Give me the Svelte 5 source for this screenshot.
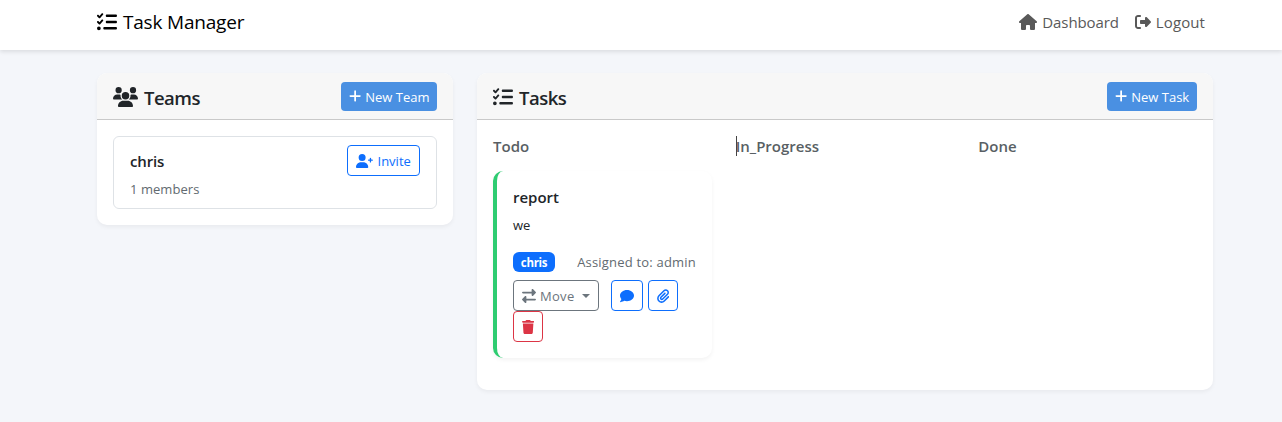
<script>
  const icons = {
    tasks: [512, 'M152.1 38.2c9.9 8.9 10.7 24 1.8 33.9l-72 80c-4.4 4.9-10.6 7.8-17.2 7.9s-12.9-2.4-17.6-7L7 113C-2.3 103.6-2.3 88.4 7 79s24.6-9.4 33.9 0l22.1 22.1 55.1-61.2c8.9-9.9 24-10.7 33.9-1.8zm0 160c9.9 8.9 10.7 24 1.8 33.9l-72 80c-4.4 4.9-10.6 7.8-17.2 7.9s-12.9-2.4-17.6-7L7 273c-9.4-9.4-9.4-24.6 0-33.9s24.6-9.4 33.9 0l22.1 22.1 55.1-61.2c8.9-9.9 24-10.7 33.9-1.8zM224 96c0-17.7 14.3-32 32-32H480c17.7 0 32 14.3 32 32s-14.3 32-32 32H256c-17.7 0-32-14.3-32-32zm0 160c0-17.7 14.3-32 32-32H480c17.7 0 32 14.3 32 32s-14.3 32-32 32H256c-17.7 0-32-14.3-32-32zM160 416c0-17.7 14.3-32 32-32H480c17.7 0 32 14.3 32 32s-14.3 32-32 32H192c-17.7 0-32-14.3-32-32zM48 368a48 48 0 1 1 0 96 48 48 0 1 1 0-96z'],
    home: [576, 'M575.8 255.5c0 18-15 32.1-32 32.1h-32l.7 160.2c0 2.7-.2 5.4-.5 8.1V472c0 22.1-17.9 40-40 40H392c-22.1 0-40-17.9-40-40V384c0-17.7-14.3-32-32-32H256c-17.7 0-32 14.3-32 32v88c0 22.1-17.9 40-40 40H104c-22.1 0-40-17.9-40-40V287.6H32c-18 0-32-14-32-32.1c0-9 3-17 10-24L266.4 8c7-7 15-8 22-8s15 2 21 7L564.8 231.5c8 7 12 15 11 24z'],
    logout: [512, 'M377.9 105.9L500.7 228.7c7.2 7.2 11.3 17.1 11.3 27.3s-4.1 20.1-11.3 27.3L377.9 406.1c-6.4 6.4-15 9.9-24 9.9c-18.7 0-33.9-15.2-33.9-33.9l0-62.1-128 0c-17.7 0-32-14.3-32-32l0-64c0-17.7 14.3-32 32-32l128 0 0-62.1c0-18.7 15.2-33.9 33.9-33.9c9 0 17.6 3.6 24 9.9zM160 96L96 96c-17.7 0-32 14.3-32 32l0 256c0 17.7 14.3 32 32 32l64 0c17.7 0 32 14.3 32 32s-14.3 32-32 32l-64 0c-53 0-96-43-96-96L0 128C0 75 43 32 96 32l64 0c17.7 0 32 14.3 32 32s-14.3 32-32 32z'],
    users: [640, 'M144 0a80 80 0 1 1 0 160A80 80 0 1 1 144 0zM512 0a80 80 0 1 1 0 160A80 80 0 1 1 512 0zM0 298.7C0 239.8 47.8 192 106.7 192h42.7c15.9 0 31 3.5 44.6 9.7c-1.3 7.2-1.9 14.7-1.9 22.3c0 38.2 16.8 72.5 43.3 96H21.3C9.6 320 0 310.4 0 298.7zM405.3 320c26.6-23.5 43.3-57.8 43.3-96c0-7.6-.7-15-1.9-22.3c13.6-6.3 28.7-9.7 44.6-9.7h42.7C592.2 192 640 239.8 640 298.7c0 11.8-9.6 21.3-21.3 21.3H405.3zM224 224a96 96 0 1 1 192 0 96 96 0 1 1 -192 0zM128 485.3C128 411.7 187.7 352 261.3 352H378.7C452.3 352 512 411.7 512 485.3c0 14.7-11.9 26.7-26.7 26.7H154.7c-14.7 0-26.7-11.9-26.7-26.7z'],
    invite: [640, 'M96 128a128 128 0 1 1 256 0A128 128 0 1 1 96 128zM0 482.3C0 383.8 79.8 304 178.3 304h91.4C368.2 304 448 383.8 448 482.3c0 16.4-13.3 29.7-29.7 29.7H29.7C13.3 512 0 498.7 0 482.3zM504 290V248H462c-13.3 0-24-10.7-24-24s10.7-24 24-24h42V158c0-13.3 10.7-24 24-24s24 10.7 24 24v42h42c13.3 0 24 10.7 24 24s-10.7 24-24 24H552v42c0 13.3-10.7 24-24 24s-24-10.7-24-24z'],
    plus: [448, 'M256 80c0-17.7-14.3-32-32-32s-32 14.3-32 32V224H48c-17.7 0-32 14.3-32 32s14.3 32 32 32H192V432c0 17.7 14.3 32 32 32s32-14.3 32-32V288H400c17.7 0 32-14.3 32-32s-14.3-32-32-32H256V80z'],
    move: [512, 'M32 96l320 0V32c0-12.9 7.8-24.6 19.8-29.6s25.7-2.2 34.9 6.9l96 96c6 6 9.4 14.1 9.4 22.6s-3.4 16.6-9.4 22.6l-96 96c-9.2 9.2-22.9 11.9-34.9 6.9s-19.8-16.6-19.8-29.6V160L32 160c-17.7 0-32-14.3-32-32s14.3-32 32-32zM480 352c17.7 0 32 14.3 32 32s-14.3 32-32 32H160v64c0 12.9-7.8 24.6-19.8 29.6s-25.7 2.2-34.9-6.9l-96-96c-6-6-9.4-14.1-9.4-22.6s3.4-16.6 9.4-22.6l96-96c9.2-9.2 22.9-11.9 34.9-6.9s19.8 16.6 19.8 29.6l0 64H480z'],
    comment: [512, 'M512 240c0 114.9-114.6 208-256 208c-37.1 0-72.3-6.4-104.1-17.9c-11.9 8.7-31.3 20.6-54.3 30.6C73.6 471.1 44.7 480 16 480c-6.5 0-12.3-3.9-14.8-9.9c-2.5-6-1.1-12.8 3.4-17.4C19 437 40 410 49 367C18 332 0 288 0 240C0 125.1 114.6 32 256 32s256 93.1 256 208z'],
    clip: [448, 'M364.2 83.8c-24.4-24.4-64-24.4-88.4 0l-184 184c-42.1 42.1-42.1 110.3 0 152.4s110.3 42.1 152.4 0l152-152c10.9-10.9 28.7-10.9 39.6 0s10.9 28.7 0 39.6l-152 152c-64 64-167.6 64-231.6 0s-64-167.6 0-231.6l184-184c46.3-46.3 121.3-46.3 167.6 0s46.3 121.3 0 167.6l-176 176c-28.6 28.6-75 28.6-103.6 0s-28.6-75 0-103.6l144-144c10.9-10.9 28.7-10.9 39.6 0s10.9 28.7 0 39.6l-144 144c-6.7 6.7-6.7 17.7 0 24.4s17.7 6.7 24.4 0l176-176c24.4-24.4 24.4-64 0-88.4z'],
    trash: [448, 'M135.2 17.7L128 32H32C14.3 32 0 46.3 0 64S14.3 96 32 96H416c17.7 0 32-14.3 32-32s-14.3-32-32-32H320l-7.2-14.3C307.4 6.8 296.3 0 284.2 0H163.8c-12.1 0-23.2 6.8-28.6 17.7zM416 128H32L53.2 467c1.6 25.3 22.6 45 47.9 45H346.9c25.3 0 46.3-19.7 47.9-45L416 128z']
  };
</script>

{#snippet icon(name)}
  <svg class="icon {name}" viewBox="0 0 {icons[name][0]} 512" aria-hidden="true"><path d={icons[name][1]} /></svg>
{/snippet}

<nav>
  <div class="brand">{@render icon('tasks')}<span>Task Manager</span></div>
  <div class="links">
    <a href="#dashboard">{@render icon('home')}<span class="dash">Dashboard</span></a>
    <a href="#logout">{@render icon('logout')}<span class="out">Logout</span></a>
  </div>
</nav>

<main>
  <section class="card teams">
    <header>
      <h5>{@render icon('users')}<span>Teams</span></h5>
      <button class="solid">{@render icon('plus')}<span>New Team</span></button>
    </header>
    <div class="body">
      <div class="team">
        <div class="info">
          <h6>chris</h6>
          <p>1 members</p>
        </div>
        <button class="outline inv">{@render icon('invite')}<span>Invite</span></button>
      </div>
    </div>
  </section>

  <section class="card board">
    <header>
      <h5>{@render icon('tasks')}<span>Tasks</span></h5>
      <button class="solid new-task">{@render icon('plus')}<span>New Task</span></button>
    </header>
    <div class="body columns">
      <div class="column">
        <h6>Todo</h6>
        <article>
          <h6 class="title">report</h6>
          <p class="desc">we</p>
          <div class="meta"><span class="badge">chris</span><span class="assigned">Assigned to: admin</span></div>
          <div class="actions">
            <button class="outline move-btn">{@render icon('move')}<span>Move</span><i class="caret"></i></button>
            <button class="outline comment-btn">{@render icon('comment')}</button>
            <button class="outline clip-btn">{@render icon('clip')}</button>
            <button class="outline danger">{@render icon('trash')}</button>
          </div>
        </article>
      </div>
      <div class="column"><h6 class="progress">In_Progress</h6></div>
      <div class="column"><h6>Done</h6></div>
    </div>
  </section>
</main>

<style>
  :global(body) { background: #f4f6fa; font-family: "Open Sans", sans-serif; color: #212529; }
  :global(#app) { min-height: 422px; }
  * { box-sizing: border-box; }
  h5, h6, p { margin: 0; }
  span, h6, p, a { white-space: nowrap; }
  .icon { display: block; flex: none; height: 1em; fill: currentColor; }
  nav { height: 50px; padding: 0 77px 6px 97px; display: flex; align-items: center; justify-content: space-between; background: #fff; box-shadow: 0 2px 4px rgba(0, 0, 0, .1); }
  .brand { display: flex; align-items: center; gap: 6px; font-size: 19px; line-height: 30px; letter-spacing: -.2px; color: #000; }
  .brand .icon { font-size: 20px; }
  .links { display: flex; gap: 16px; }
  .links a { display: flex; align-items: center; gap: 5px; font-size: 15px; line-height: 24px; letter-spacing: -.1px; color: #595959; text-decoration: none; }
  .out { letter-spacing: .1px; }
  .links .icon { font-size: 16px; }
  main { display: grid; grid-template-columns: 356px 736px; gap: 24px; align-items: start; padding: 23px 0 0 97px; }
  .card { background: #fff; border-radius: 10px; box-shadow: 0 2px 4px rgba(0, 0, 0, .05); overflow: hidden; }
  .card header { height: 47px; padding: 0 16px; display: flex; align-items: center; justify-content: space-between; background: #f7f7f7; border-bottom: 1px solid #c9c9c9; }
  h5 { display: flex; align-items: center; gap: 6px; padding-top: 1px; font-size: 18.5px; line-height: 24px; font-weight: 600; letter-spacing: -.5px; }
  h5 span { padding-top: 2px; }
  h5 .icon { font-size: 20px; }
  .body { padding: 16px; }
  button { display: flex; align-items: center; margin: 0; border-radius: 4px; font-family: inherit; font-size: 13px; line-height: 21px; }
  button span { padding-top: 1px; }
  button .icon { font-size: 14px; }
  .solid { width: 96px; height: 29px; padding: 0 8px; gap: 4px; border: 0; background: #4a90e2; color: #fff; }
  .solid span { padding-top: 2px; }
  .new-task { width: 90px; }
  .outline { height: 31px; padding: 0 8px; border: 1px solid #0d6efd; background: transparent; color: #0d6efd; }
  .team { height: 73px; display: flex; justify-content: space-between; padding: 8px 16px; border: 1px solid #dee2e6; border-radius: 6px; }
  .team h6 { margin-top: 7px; font-size: 15px; line-height: 19px; font-weight: 600; letter-spacing: -.15px; }
  .team p { margin-top: 8px; font-size: 13px; line-height: 21px; letter-spacing: .05px; color: #626a70; }
  .inv { width: 73px; gap: 4px; }
  .columns { display: grid; grid-template-columns: 219px 219px 219px; column-gap: 23.67px; height: 270px; }
  .column > h6 { font-size: 15px; line-height: 19px; font-weight: 600; color: #595f64; padding-top: 1px; }
  .progress { box-shadow: inset 1px 0 #444; }
  article { margin-top: 15px; height: 187px; padding: 16px; border-left: 4px solid #2ecc71; border-radius: 10px; box-shadow: 0 2px 4px rgba(0, 0, 0, .05); }
  .title { font-size: 15px; line-height: 20px; font-weight: 600; }
  .desc { margin-top: 8px; font-size: 13px; line-height: 21px; }
  .meta { height: 21px; margin-top: 15px; display: flex; align-items: center; justify-content: space-between; }
  .badge { width: 42px; height: 20px; border-radius: 6px; background: #0d6efd; color: #fff; font-size: 11.5px; font-weight: 700; line-height: 21px; letter-spacing: -.3px; text-align: center; }
  .assigned { padding-top: 2px; font-size: 13px; line-height: 21px; letter-spacing: .2px; color: #626a70; }
  .actions { display: flex; flex-wrap: wrap; margin-top: 8px; }
  .move-btn { width: 86px; margin-right: 12px; gap: 4px; border-color: #6c757d; color: #6c757d; letter-spacing: .3px; }
  .caret { margin-left: 3px; border: 4px solid transparent; border-top-color: currentColor; border-bottom: 0; }
  .comment-btn { width: 32px; margin-right: 5px; }
  .clip-btn { width: 30px; }
  .danger { width: 30px; border-color: #dc3545; color: #dc3545; }
</style>
